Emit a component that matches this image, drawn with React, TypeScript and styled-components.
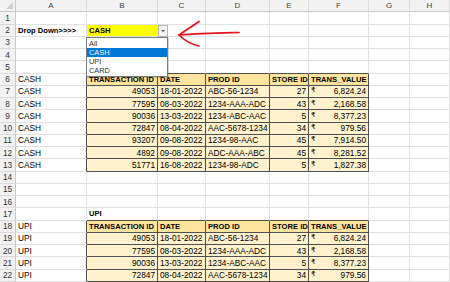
import styled, { createGlobalStyle } from 'styled-components';

const GlobalStyle = createGlobalStyle`
  html, body {
    margin: 0;
    padding: 0;
    background: #fff;
    overflow: hidden;
  }
  body {
    font-family: 'Liberation Sans', Arial, sans-serif;
  }
`;

const COL_WIDTHS = [16, 71, 71, 48, 64, 39, 60, 41, 40];
const COLS = ['A', 'B', 'C', 'D', 'E', 'F', 'G', 'H'];
const ROW_H = 12.25;
const ROW_COUNT = 22;

const HEADERS = ['TRANSACTION ID', 'DATE', 'PROD ID', 'STORE ID', 'TRANS_VALUE'];
const RECORDS = [
  ['49053', '18-01-2022', 'ABC-56-1234', '27', '6,824.24'],
  ['77595', '08-03-2022', '1234-AAA-ADC', '43', '2,168.58'],
  ['90036', '13-03-2022', '1234-ABC-AAC', '5', '8,377.23'],
  ['72847', '08-04-2022', 'AAC-5678-1234', '34', '979.56'],
  ['93207', '09-08-2022', '1234-98-AAC', '45', '7,914.50'],
  ['4892', '09-08-2022', 'ADC-AAA-ABC', '45', '8,281.52'],
  ['51771', '16-08-2022', '1234-98-ADC', '5', '1,827.38'],
];

type CellDef = {
  text?: string;
  bold?: boolean;
  align?: 'left' | 'right';
  fill?: string;
  money?: boolean;
};

// tables: header row + number of data rows, columns B..F (index 1..5)
const TABLES = [
  { head: 6, count: 7, label: 'CASH' },
  { head: 18, count: 4, label: 'UPI' },
];

const inTable = (r: number, c: number) =>
  c >= 1 &&
  c <= 5 &&
  TABLES.some((t) => r >= t.head && r <= t.head + t.count);

function buildCells() {
  const rows: Record<number, CellDef[]> = {};
  for (let r = 1; r <= ROW_COUNT; r++) rows[r] = COLS.map(() => ({}));

  rows[2][0] = { text: 'Drop Down>>>>', bold: true };
  rows[2][1] = { text: 'CASH', bold: true, fill: '#ffff00' };
  rows[17][1] = { text: 'UPI', bold: true };

  TABLES.forEach((t) => {
    rows[t.head][0] = { text: t.label };
    HEADERS.forEach((h, i) => {
      rows[t.head][i + 1] = { text: h, bold: true, fill: '#fde49e' };
    });
    RECORDS.slice(0, t.count).forEach((rec, j) => {
      const r = t.head + 1 + j;
      rows[r][0] = { text: t.label };
      rows[r][1] = { text: rec[0], align: 'right', fill: '#fff2cc' };
      rows[r][2] = { text: rec[1], fill: '#fff2cc' };
      rows[r][3] = { text: rec[2], fill: '#fff2cc' };
      rows[r][4] = { text: rec[3], align: 'right', fill: '#fff2cc' };
      rows[r][5] = { text: rec[4], money: true, fill: '#fff2cc' };
    });
  });
  return rows;
}

const Sheet = styled.div`
  position: relative;
  width: 450px;
  height: 282px;
  overflow: hidden;
  background: #fff;
`;

const Grid = styled.div`
  display: grid;
  grid-template-columns: ${COL_WIDTHS.map((w) => `${w}px`).join(' ')};
  grid-auto-rows: ${ROW_H}px;
`;

const Corner = styled.div`
  position: relative;
  background: #f2f2f2;
  border-right: 1px solid #c8c8c8;
  border-bottom: 1px solid #c8c8c8;
  box-sizing: border-box;

  &::after {
    content: '';
    position: absolute;
    right: 2px;
    bottom: 2px;
    border-left: 7px solid transparent;
    border-bottom: 7px solid #cfcfcf;
  }
`;

const ColHead = styled.div`
  display: flex;
  align-items: center;
  justify-content: center;
  background: #f2f2f2;
  border-right: 1px solid #dadada;
  border-bottom: 1px solid #c8c8c8;
  box-sizing: border-box;
  color: #444;
  font-size: 8px;
`;

const RowHead = styled.div`
  display: flex;
  align-items: center;
  justify-content: center;
  background: #f2f2f2;
  border-right: 1px solid #c8c8c8;
  border-bottom: 1px solid #dadada;
  box-sizing: border-box;
  color: #333;
  font-size: 8.3px;
`;

const Cell = styled.div<{
  $fill?: string;
  $bold?: boolean;
  $align?: 'left' | 'right';
  $darkRight: boolean;
  $darkBottom: boolean;
}>`
  display: flex;
  align-items: center;
  justify-content: ${(p) => (p.$align === 'right' ? 'flex-end' : 'flex-start')};
  padding: 0 2px;
  box-sizing: border-box;
  background: ${(p) => p.$fill || '#fff'};
  border-right: 1px solid ${(p) => (p.$darkRight ? '#4f4f4f' : '#e1e1e1')};
  border-bottom: 1px solid ${(p) => (p.$darkBottom ? '#4f4f4f' : '#e1e1e1')};
  color: #000;
  font-size: ${(p) => (p.$bold ? '7.6px' : '8.3px')};
  font-weight: ${(p) => (p.$bold ? 700 : 400)};
  white-space: nowrap;
  overflow: visible;
`;

const Money = styled.div`
  display: flex;
  justify-content: space-between;
  width: 100%;
`;

const Rupee = styled.span`
  font-family: 'DejaVu Sans', sans-serif;
  font-size: 7px;
`;

const DropButton = styled.div`
  position: absolute;
  left: 158px;
  top: 25px;
  width: 10px;
  height: 12px;
  box-sizing: border-box;
  background: #f4f4f4;
  border: 1px solid #b4b4b4;
  display: flex;
  align-items: center;
  justify-content: center;

  &::after {
    content: '';
    border-left: 2px solid transparent;
    border-right: 2px solid transparent;
    border-top: 2px solid #555;
  }
`;

const DropList = styled.div`
  position: absolute;
  left: 86px;
  top: 37px;
  width: 82px;
  box-sizing: border-box;
  padding: 1px 0;
  background: #fff;
  border: 1px solid #7a7a7a;
  box-shadow: 1px 1px 0 rgba(0, 0, 0, 0.15);
  display: flex;
  flex-direction: column;
`;

const DropItem = styled.div<{ $selected?: boolean }>`
  height: 9px;
  line-height: 9px;
  padding-left: 2px;
  font-size: 7.4px;
  color: ${(p) => (p.$selected ? '#fff' : '#333')};
  background: ${(p) => (p.$selected ? '#0078d7' : 'transparent')};
`;

const Scribble = styled.svg`
  position: absolute;
  left: 0;
  top: 0;
  pointer-events: none;
`;

export default function App() {
  const rows = buildCells();
  const options = ['All', 'CASH', 'UPI', 'CARD'];

  return (
    <Sheet>
      <GlobalStyle />
      <Grid>
        <Corner />
        {COLS.map((c) => (
          <ColHead key={c}>{c}</ColHead>
        ))}
        {Array.from({ length: ROW_COUNT }, (_, i) => i + 1).map((r) => [
          <RowHead key={`h${r}`}>{r}</RowHead>,
          ...rows[r].map((cell, c) => (
            <Cell
              key={`${r}-${c}`}
              $fill={cell.fill}
              $bold={cell.bold}
              $align={cell.align}
              $darkRight={inTable(r, c) || inTable(r, c + 1)}
              $darkBottom={inTable(r, c) || inTable(r + 1, c)}
            >
              {cell.money ? (
                <Money>
                  <Rupee>₹</Rupee>
                  <span>{cell.text}</span>
                </Money>
              ) : (
                cell.text
              )}
            </Cell>
          )),
        ])}
      </Grid>

      <DropButton />
      <DropList>
        {options.map((o) => (
          <DropItem key={o} $selected={o === 'CASH'}>
            {o}
          </DropItem>
        ))}
      </DropList>

      <Scribble width="450" height="282" viewBox="0 0 450 282">
        <g fill="none" stroke="#e3121b" strokeWidth="1.7" strokeLinecap="round">
          <path d="M239 32.5 C 222 33, 200 33.5, 179 35" />
          <path d="M179 35 C 186 30, 193 26, 199 21.5" />
          <path d="M179 35 C 184 40, 190 44, 199 46" />
        </g>
      </Scribble>
    </Sheet>
  );
}
